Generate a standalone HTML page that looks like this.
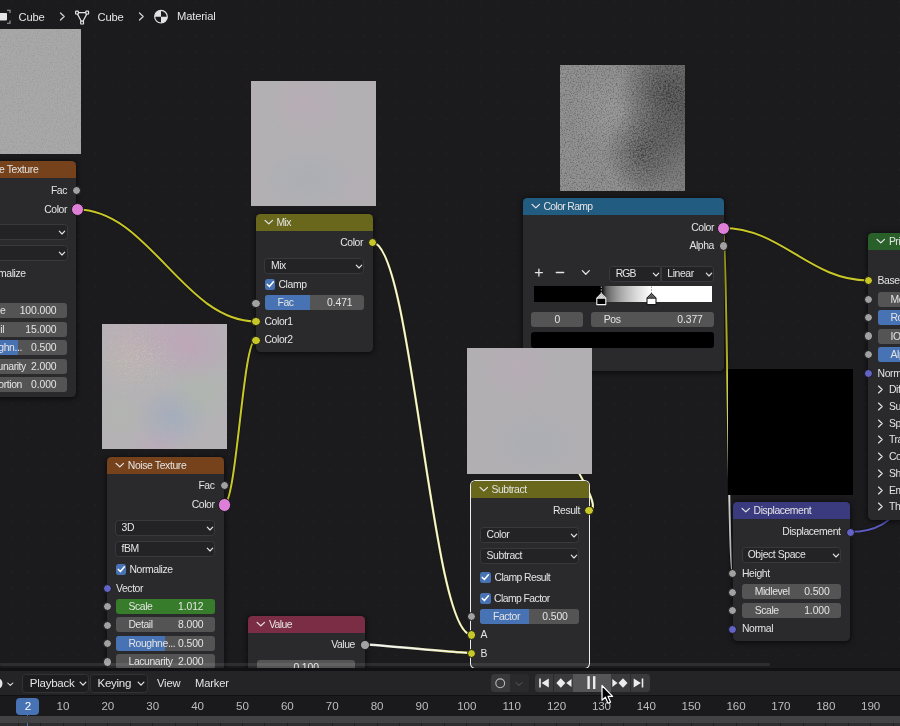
<!DOCTYPE html><html><head><meta charset="utf-8"><title>Shader Editor</title><style>
html,body{margin:0;padding:0}
body{width:900px;height:726px;overflow:hidden;background:#1b1a1d;position:relative;
font-family:"Liberation Sans",sans-serif;font-size:10.4px;letter-spacing:-0.4px;color:#e4e4e4;}
#grid{position:absolute;left:0;top:0;width:900px;height:668px;
background-image:radial-gradient(circle,#212024 0.7px,transparent 1.2px);background-size:16.75px 16.75px;background-position:3.28px 10.57px}
.a{position:absolute}
.node{position:absolute;background:#2a292c;border-radius:4.5px;box-shadow:0 1px 5px 1px rgba(0,0,0,.55)}
.hd{position:absolute;left:0;top:0;right:0;height:17px;border-radius:4.5px 4.5px 0 0;line-height:17px;white-space:nowrap;overflow:hidden}
.t{position:absolute;white-space:nowrap;line-height:15px;height:15px}
.r{text-align:right}
.fld{position:absolute;height:15px;line-height:15px;background:#545454;border-radius:3px;overflow:hidden;white-space:nowrap}
.fld i{position:absolute;left:0;top:0;bottom:0;background:#4772b3}
.fld b{position:absolute;font-weight:normal;top:0}
.dd{position:absolute;height:14px;line-height:14px;background:#232225;border:0.75px solid #39383c;border-radius:3.5px;white-space:nowrap;box-sizing:content-box}
.dd span{position:absolute;left:7px;top:0}
.dd svg{position:absolute;right:0.3px;top:5.2px}
.ck{position:absolute;width:10.5px;height:10.5px;background:#4772b3;border-radius:2.5px}
.ck svg{position:absolute;left:0;top:0}
.pv{position:absolute}
svg{display:block}
</style></head><body>
<div id="grid"></div><div id="all" style="position:absolute;left:0;top:0;width:900px;height:726px;will-change:transform">
<svg class="a" style="left:0;top:0" width="900" height="668" viewBox="0 0 900 668">
<defs><linearGradient id="gv" gradientUnits="userSpaceOnUse" x1="364" y1="0" x2="471" y2="0"><stop offset="0" stop-color="#dedede"/><stop offset="0.4" stop-color="#dedecb"/><stop offset="1" stop-color="#dcdc7c"/></linearGradient><linearGradient id="gh" gradientUnits="userSpaceOnUse" x1="0" y1="228" x2="0" y2="573"><stop offset="0" stop-color="#c7c729"/><stop offset="0.4" stop-color="#c7c729"/><stop offset="0.78" stop-color="#d6d6d6"/><stop offset="1" stop-color="#d6d6d6"/></linearGradient></defs>
<path d="M77,209.5 C148.4,209.5 184.1,321.3 255.5,321.3" fill="none" stroke="#121212" stroke-width="3.4" stroke-linecap="round"/><path d="M77,209.5 C148.4,209.5 184.1,321.3 255.5,321.3" fill="none" stroke="#c7c729" stroke-width="2.0" stroke-linecap="round"/>
<path d="M224,504.5 C236.6,504.5 242.9,339.8 255.5,339.8" fill="none" stroke="#121212" stroke-width="3.4" stroke-linecap="round"/><path d="M224,504.5 C236.6,504.5 242.9,339.8 255.5,339.8" fill="none" stroke="#c7c729" stroke-width="2.0" stroke-linecap="round"/>
<path d="M372.5,242.5 C411.9,242.5 431.6,634.5 471,634.5" fill="none" stroke="#121212" stroke-width="3.4" stroke-linecap="round"/><path d="M372.5,242.5 C411.9,242.5 431.6,634.5 471,634.5" fill="none" stroke="#dcdc84" stroke-width="2.3" stroke-linecap="round"/><path d="M372.5,242.5 C411.9,242.5 431.6,634.5 471,634.5" fill="none" stroke="#fbfbf2" stroke-width="1.1" stroke-linecap="round"/>
<path d="M364.5,644.5 C376.4,644.5 459.1,653 471,653" fill="none" stroke="#121212" stroke-width="3.4" stroke-linecap="round"/><path d="M364.5,644.5 C376.4,644.5 459.1,653 471,653" fill="none" stroke="url(#gv)" stroke-width="2.3" stroke-linecap="round"/><path d="M364.5,644.5 C376.4,644.5 459.1,653 471,653" fill="none" stroke="#fbfbf4" stroke-width="1.1" stroke-linecap="round"/>
<path d="M589,510 C615.6,510 495.9,358 522.5,358" fill="none" stroke="#121212" stroke-width="3.4" stroke-linecap="round"/><path d="M589,510 C615.6,510 495.9,358 522.5,358" fill="none" stroke="#dcdc84" stroke-width="2.3" stroke-linecap="round"/><path d="M589,510 C615.6,510 495.9,358 522.5,358" fill="none" stroke="#fbfbf2" stroke-width="1.1" stroke-linecap="round"/>
<path d="M723,228 C781.0,228 810.0,280.4 868,280.4" fill="none" stroke="#121212" stroke-width="3.4" stroke-linecap="round"/><path d="M723,228 C781.0,228 810.0,280.4 868,280.4" fill="none" stroke="#c7c729" stroke-width="2.0" stroke-linecap="round"/>
<path d="M723,228 C726.7,228 728.6,573.3 732.3,573.3" fill="none" stroke="#121212" stroke-width="3.4" stroke-linecap="round"/><path d="M723,228 C726.7,228 728.6,573.3 732.3,573.3" fill="none" stroke="url(#gh)" stroke-width="2.0" stroke-linecap="round"/>
<path d="M850,531.8 C880,531.8 890,520 910,500" fill="none" stroke="#121212" stroke-width="3.4" stroke-linecap="round"/><path d="M850,531.8 C880,531.8 890,520 910,500" fill="none" stroke="#5a5ac0" stroke-width="2.0" stroke-linecap="round"/>
</svg>
<svg class="a" width="0" height="0"><defs>
<filter id="nz" x="0" y="0" width="100%" height="100%"><feTurbulence type="fractalNoise" baseFrequency="0.75" numOctaves="2" seed="3" result="n"/><feColorMatrix type="matrix" values="0 0 0 0 0  0 0 0 0 0  0 0 0 0 0  1.8 0 0 0 -0.8"/></filter>
<filter id="nz3" x="0" y="0" width="100%" height="100%"><feTurbulence type="fractalNoise" baseFrequency="0.6" numOctaves="2" seed="11"/><feColorMatrix type="matrix" values="0 0 0 0 0  0 0 0 0 0  0 0 0 0 0  2.4 0 0 0 -1.0"/></filter>
<filter id="nzy" x="0" y="0" width="100%" height="100%"><feTurbulence type="fractalNoise" baseFrequency="0.85" numOctaves="1" seed="5"/><feColorMatrix type="matrix" values="0 0 0 0 0.86  0 0 0 0 0.8  0 0 0 0 0.6  3 0 0 0 -1.6"/></filter>
<filter id="nzb" x="0" y="0" width="100%" height="100%"><feTurbulence type="fractalNoise" baseFrequency="0.85" numOctaves="1" seed="9"/><feColorMatrix type="matrix" values="0 0 0 0 0.45  0 0 0 0 0.55  0 0 0 0 0.8  3 0 0 0 -1.65"/></filter>
<filter id="nz2" x="0" y="0" width="100%" height="100%"><feTurbulence type="fractalNoise" baseFrequency="0.8" numOctaves="1" seed="8"/><feColorMatrix type="matrix" values="0 0 0 0 1  0 0 0 0 1  0 0 0 0 1  0.5 0 0 0 -0.2"/></filter>
</defs></svg>
<div class="pv" style="left:0px;top:28.5px;width:80.5px;height:125.5px;background:#a9a9aa;overflow:hidden"><svg width="81" height="126"><rect width="81" height="126" filter="url(#nz)" opacity=".12"/></svg></div>
<div class="node" style="left:-40px;top:161.3px;width:116.3px;height:236px;"><div class="hd" style="background:#75421b"><svg class="a" style="left:8px;top:5.2px" width="9.6" height="6.6" viewBox="0 0 9 7" preserveAspectRatio="none"><polyline points="1,1.5 4.5,5.2 8,1.5" fill="none" stroke="#e4e4e4" stroke-width="1.15" stroke-linecap="round" stroke-linejoin="round"/></svg><span class="a" style="left:39px;top:0;letter-spacing:-0.36px">e Texture</span></div></div>
<span class="t" style="top:182.5px;right:833px;">Fac</span>
<span class="t" style="top:201.5px;right:833px;">Color</span>
<div class="dd" style="left:-40px;top:223.7px;width:105.5px;"><span style="left:5.6px"></span><svg width="8" height="6" viewBox="0 0 8 6"><polyline points="1.3,1.2 4,4 6.7,1.2" fill="none" stroke="#e4e4e4" stroke-width="1.15" stroke-linecap="round" stroke-linejoin="round"/></svg></div>
<div class="dd" style="left:-40px;top:244.6px;width:105.5px;"><span style="left:5.6px"></span><svg width="8" height="6" viewBox="0 0 8 6"><polyline points="1.3,1.2 4,4 6.7,1.2" fill="none" stroke="#e4e4e4" stroke-width="1.15" stroke-linecap="round" stroke-linejoin="round"/></svg></div>
<span class="t" style="top:266px;left:-2px;">malize</span>
<div class="fld" style="left:-30px;top:303.3px;width:97px;height:15px;line-height:15px;"><b style="left:30px">e</b><b style="right:10.5px;letter-spacing:-0.1px">100.000</b></div>
<div class="fld" style="left:-30px;top:321.75px;width:97px;height:15px;line-height:15px;"><b style="left:30.3px">il</b><b style="right:10.5px;letter-spacing:-0.1px">15.000</b></div>
<div class="fld" style="left:-30px;top:340.2px;width:97px;height:15px;line-height:15px;"><i style="width:48px"></i><b style="left:28.3px">ghn...</b><b style="right:10.5px;letter-spacing:-0.1px">0.500</b></div>
<div class="fld" style="left:-30px;top:358.65px;width:97px;height:15px;line-height:15px;"><b style="left:27.5px">unarity</b><b style="right:10.5px;letter-spacing:-0.1px">2.000</b></div>
<div class="fld" style="left:-30px;top:377.09999999999997px;width:97px;height:15px;line-height:15px;"><b style="left:28.3px">ortion</b><b style="right:10.5px;letter-spacing:-0.1px">0.000</b></div>
<div class="a" style="left:72.1px;top:185.8px;width:7.2px;height:7.2px;border-radius:50%;background:#a1a1a1;border:0.6px solid #151515"></div>
<div class="a" style="left:70.8px;top:203.3px;width:11.2px;height:11.2px;border-radius:50%;background:#dd7fd6;border:0.6px solid #151515"></div>
<div class="pv" style="left:101.6px;top:323.6px;width:125.8px;height:125.5px;background:radial-gradient(ellipse 36% 30% at 70% 18%,rgba(192,160,186,.6),rgba(192,160,186,0) 100%),radial-gradient(ellipse 60% 30% at 45% 8%,rgba(190,166,184,.5),rgba(190,166,184,0) 100%),radial-gradient(ellipse 32% 32% at 22% 24%,rgba(200,182,172,.4),rgba(200,182,172,0) 100%),radial-gradient(ellipse 28% 28% at 78% 55%,rgba(168,186,168,.45),rgba(168,186,168,0) 100%),radial-gradient(ellipse 30% 26% at 56% 74%,rgba(152,168,192,.55),rgba(152,168,192,0) 100%),radial-gradient(ellipse 26% 18% at 45% 97%,rgba(192,164,192,.45),rgba(192,164,192,0) 100%),radial-gradient(ellipse 22% 22% at 14% 72%,rgba(178,186,170,.4),rgba(178,186,170,0) 100%),#b4b2b5;overflow:hidden"><svg class="a" style="left:0;top:0;-webkit-mask-image:radial-gradient(ellipse 45% 40% at 30% 25%,#000,transparent);mask-image:radial-gradient(ellipse 45% 40% at 30% 25%,#000,transparent)" width="126" height="126"><rect width="126" height="126" filter="url(#nzy)" opacity=".55"/></svg><svg class="a" style="left:0;top:0;-webkit-mask-image:radial-gradient(ellipse 30% 30% at 62% 76%,#000,transparent);mask-image:radial-gradient(ellipse 30% 30% at 62% 76%,#000,transparent)" width="126" height="126"><rect width="126" height="126" filter="url(#nzb)" opacity=".5"/></svg></div>
<div class="node" style="left:106.8px;top:456.9px;width:117px;height:230px;"><div class="hd" style="background:#75421b"><svg class="a" style="left:8px;top:5.2px" width="9.6" height="6.6" viewBox="0 0 9 7" preserveAspectRatio="none"><polyline points="1,1.5 4.5,5.2 8,1.5" fill="none" stroke="#e4e4e4" stroke-width="1.15" stroke-linecap="round" stroke-linejoin="round"/></svg><span class="a" style="left:21px;top:0;letter-spacing:-0.37px">Noise Texture</span></div></div>
<span class="t" style="top:478px;right:685.5px;">Fac</span>
<span class="t" style="top:497px;right:685.5px;">Color</span>
<div class="dd" style="left:115px;top:519.6px;width:98.0px;"><span style="left:5.6px">3D</span><svg width="8" height="6" viewBox="0 0 8 6"><polyline points="1.3,1.2 4,4 6.7,1.2" fill="none" stroke="#e4e4e4" stroke-width="1.15" stroke-linecap="round" stroke-linejoin="round"/></svg></div>
<div class="dd" style="left:115px;top:540.6px;width:98.0px;"><span style="left:5.6px">fBM</span><svg width="8" height="6" viewBox="0 0 8 6"><polyline points="1.3,1.2 4,4 6.7,1.2" fill="none" stroke="#e4e4e4" stroke-width="1.15" stroke-linecap="round" stroke-linejoin="round"/></svg></div>
<div class="ck" style="left:115.5px;top:564px"><svg width="10.5" height="10.5" viewBox="0 0 10.5 10.5"><polyline points="2.3,5.4 4.4,7.6 8.4,2.8" fill="none" stroke="#fff" stroke-width="1.5" stroke-linecap="round" stroke-linejoin="round"/></svg></div>
<span class="t" style="top:561.8px;left:129.5px;">Normalize</span>
<span class="t" style="top:580.5px;left:116px;">Vector</span>
<div class="fld" style="left:115.5px;top:598.8px;width:99px;height:15px;line-height:15px;background:#377c2a;"><b style="left:13px">Scale</b><b style="right:11px;letter-spacing:-0.1px">1.012</b></div>
<div class="fld" style="left:115.5px;top:617.3px;width:99px;height:15px;line-height:15px;"><b style="left:13px">Detail</b><b style="right:11px;letter-spacing:-0.1px">8.000</b></div>
<div class="fld" style="left:115.5px;top:635.7px;width:99px;height:15px;line-height:15px;"><i style="width:49px"></i><b style="left:13px">Roughne...</b><b style="right:11px;letter-spacing:-0.1px">0.500</b></div>
<div class="fld" style="left:115.5px;top:654.2px;width:99px;height:15px;line-height:15px;"><b style="left:13px">Lacunarity</b><b style="right:11px;letter-spacing:-0.1px">2.000</b></div>
<div class="a" style="left:219.6px;top:481.3px;width:7.2px;height:7.2px;border-radius:50%;background:#a1a1a1;border:0.6px solid #151515"></div>
<div class="a" style="left:217.6px;top:498.1px;width:11.6px;height:11.6px;border-radius:50%;background:#dd7fd6;border:0.6px solid #151515"></div>
<div class="a" style="left:102.5px;top:583.7px;width:7.4px;height:7.4px;border-radius:50%;background:#6363c7;border:0.6px solid #151515"></div>
<div class="a" style="left:102.5px;top:602.0px;width:7.4px;height:7.4px;border-radius:50%;background:#a1a1a1;border:0.6px solid #151515"></div>
<div class="a" style="left:102.5px;top:620.5px;width:7.4px;height:7.4px;border-radius:50%;background:#a1a1a1;border:0.6px solid #151515"></div>
<div class="a" style="left:102.5px;top:638.9px;width:7.4px;height:7.4px;border-radius:50%;background:#a1a1a1;border:0.6px solid #151515"></div>
<div class="a" style="left:102.5px;top:657.4px;width:7.4px;height:7.4px;border-radius:50%;background:#a1a1a1;border:0.6px solid #151515"></div>
<div class="pv" style="left:250.8px;top:80.5px;width:125.5px;height:125.8px;background:radial-gradient(ellipse 34% 30% at 45% 18%,rgba(190,170,184,.5),rgba(190,170,184,0) 100%),radial-gradient(ellipse 40% 26% at 45% 78%,rgba(164,172,182,.5),rgba(164,172,182,0) 100%),radial-gradient(ellipse 22% 22% at 85% 85%,rgba(184,172,184,.4),rgba(184,172,184,0) 100%),#b2b0b3;overflow:hidden"></div>
<div class="node" style="left:255.5px;top:213.6px;width:117px;height:138.4px;"><div class="hd" style="background:#68671b"><svg class="a" style="left:8px;top:5.2px" width="9.6" height="6.6" viewBox="0 0 9 7" preserveAspectRatio="none"><polyline points="1,1.5 4.5,5.2 8,1.5" fill="none" stroke="#e4e4e4" stroke-width="1.15" stroke-linecap="round" stroke-linejoin="round"/></svg><span class="a" style="left:21px;top:0;letter-spacing:-0.55px">Mix</span></div></div>
<span class="t" style="top:235px;right:537px;">Color</span>
<div class="dd" style="left:264.3px;top:258px;width:97.5px;"><span style="left:5.6px">Mix</span><svg width="8" height="6" viewBox="0 0 8 6"><polyline points="1.3,1.2 4,4 6.7,1.2" fill="none" stroke="#e4e4e4" stroke-width="1.15" stroke-linecap="round" stroke-linejoin="round"/></svg></div>
<div class="ck" style="left:264.5px;top:279.3px"><svg width="10.5" height="10.5" viewBox="0 0 10.5 10.5"><polyline points="2.3,5.4 4.4,7.6 8.4,2.8" fill="none" stroke="#fff" stroke-width="1.5" stroke-linecap="round" stroke-linejoin="round"/></svg></div>
<span class="t" style="top:277.1px;left:278.5px;">Clamp</span>
<div class="fld" style="left:264.5px;top:295.2px;width:99px;height:15px;line-height:15px;"><i style="width:45.5px"></i><b style="left:13px">Fac</b><b style="right:11px;letter-spacing:-0.1px">0.471</b></div>
<span class="t" style="top:313.8px;left:264.5px;">Color1</span>
<span class="t" style="top:332.4px;left:264.5px;">Color2</span>
<div class="a" style="left:368.3px;top:238.3px;width:7.2px;height:7.2px;border-radius:50%;background:#c7c729;border:0.6px solid #151515"></div>
<div class="a" style="left:251.2px;top:298.5px;width:7.4px;height:7.4px;border-radius:50%;background:#a1a1a1;border:0.6px solid #151515"></div>
<div class="a" style="left:251.2px;top:317.0px;width:7.4px;height:7.4px;border-radius:50%;background:#c7c729;border:0.6px solid #151515"></div>
<div class="a" style="left:251.2px;top:335.5px;width:7.4px;height:7.4px;border-radius:50%;background:#c7c729;border:0.6px solid #151515"></div>
<div class="node" style="left:248px;top:615.5px;width:116.5px;height:60px;"><div class="hd" style="background:#7c2d46"><svg class="a" style="left:8px;top:5.2px" width="9.6" height="6.6" viewBox="0 0 9 7" preserveAspectRatio="none"><polyline points="1,1.5 4.5,5.2 8,1.5" fill="none" stroke="#e4e4e4" stroke-width="1.15" stroke-linecap="round" stroke-linejoin="round"/></svg><span class="a" style="left:21px;top:0;letter-spacing:-0.55px">Value</span></div></div>
<span class="t" style="top:637px;right:545px;">Value</span>
<div class="fld" style="left:256.8px;top:660px;width:98.7px;height:15px;line-height:15px;"><b style="left:0;right:0;text-align:center;letter-spacing:-0.1px">0.100</b></div>
<div class="a" style="left:360.2px;top:640.2px;width:7.4px;height:7.4px;border-radius:50%;background:#a1a1a1;border:0.6px solid #151515"></div>
<div class="pv" style="left:559.6px;top:65px;width:125.5px;height:126px;background:radial-gradient(ellipse 40% 48% at 88% 22%,rgba(0,0,0,.25),rgba(0,0,0,0) 100%),radial-gradient(ellipse 30% 34% at 66% 68%,rgba(0,0,0,.2),rgba(0,0,0,0) 100%),radial-gradient(ellipse 30% 40% at 100% 60%,rgba(0,0,0,.14),rgba(0,0,0,0) 100%),radial-gradient(ellipse 34% 34% at 42% 36%,rgba(255,255,255,.08),rgba(255,255,255,0) 100%),linear-gradient(90deg,#929292 0%,#929292 50%,#858585 75%,#828282 100%);overflow:hidden"><svg width="126" height="127"><rect width="126" height="127" filter="url(#nz)" opacity=".42"/></svg><svg class="a" style="left:0;top:0;-webkit-mask-image:radial-gradient(ellipse 42% 50% at 86% 24%,#000,transparent),radial-gradient(ellipse 30% 36% at 66% 70%,#000,transparent);mask-image:radial-gradient(ellipse 42% 50% at 86% 24%,#000,transparent),radial-gradient(ellipse 30% 36% at 66% 70%,#000,transparent)" width="126" height="127"><rect width="126" height="127" filter="url(#nz3)" opacity=".5"/></svg></div>
<div class="node" style="left:522.5px;top:198px;width:201.2px;height:173.3px;"><div class="hd" style="background:#225c80"><svg class="a" style="left:8px;top:5.2px" width="9.6" height="6.6" viewBox="0 0 9 7" preserveAspectRatio="none"><polyline points="1,1.5 4.5,5.2 8,1.5" fill="none" stroke="#e4e4e4" stroke-width="1.15" stroke-linecap="round" stroke-linejoin="round"/></svg><span class="a" style="left:21px;top:0;letter-spacing:-0.65px">Color Ramp</span></div></div>
<span class="t" style="top:219.5px;right:186px;">Color</span>
<span class="t" style="top:238px;right:186px;">Alpha</span>
<svg class="a" style="left:533px;top:266px" width="60" height="14" viewBox="0 0 60 14"><g stroke="#e4e4e4" stroke-width="1.3" fill="none" stroke-linecap="round" stroke-linejoin="round"><path d="M2.4,6.6 H9.4 M5.9,3.1 V10.1"/><path d="M23.3,6.5 H30.7"/><polyline points="49.3,4.6 52.8,8.2 56.3,4.6"/></g></svg>
<div class="dd" style="left:609.2px;top:265.8px;width:49.7px;border-radius:3.5px 0 0 3.5px;letter-spacing:-0.9px"><span style="left:5.5px">RGB</span><svg width="8" height="6" viewBox="0 0 8 6"><polyline points="1.3,1.2 4,4 6.7,1.2" fill="none" stroke="#e4e4e4" stroke-width="1.15" stroke-linecap="round" stroke-linejoin="round"/></svg></div>
<div class="dd" style="left:660.8px;top:265.8px;width:51.5px;border-radius:0 3.5px 3.5px 0"><span style="left:5.5px">Linear</span><svg width="8" height="6" viewBox="0 0 8 6"><polyline points="1.3,1.2 4,4 6.7,1.2" fill="none" stroke="#e4e4e4" stroke-width="1.15" stroke-linecap="round" stroke-linejoin="round"/></svg></div>
<div class="a" style="left:533.8px;top:286.4px;width:178px;height:15.3px;background:linear-gradient(90deg,#000 0,#000 67.3px,#595959 72.3px,#7c7c7c 77.3px,#959595 82.4px,#aaaaaa 87.4px,#bcbcbc 92.4px,#cbcbcb 97.4px,#dadada 102.4px,#e7e7e7 107.5px,#f3f3f3 112.5px,#fff 117.5px,#fff 100%)"></div>
<svg class="a" style="left:590px;top:284px" width="80" height="24" viewBox="0 0 80 24"><path d="M11.3,2.5 V9.5" stroke="#fff" stroke-width="0.8" stroke-dasharray="1.4,1.4"/><path d="M61.5,2.5 V9.5" stroke="#777" stroke-width="0.8" stroke-dasharray="1.4,1.4"/><path d="M6.800000000000001,14.2 L11.3,9.6 L15.8,14.2 V20.6 H6.800000000000001 Z" fill="#000" stroke="#f2f2f2" stroke-width="1.1" stroke-linejoin="round"/><path d="M7.4,14 L11.3,10.2 L15.200000000000001,14 Z" fill="#d0d0d0"/><path d="M6.800000000000001,14.3 H15.8" stroke="#f2f2f2" stroke-width="0.9"/><path d="M57.0,14.2 L61.5,9.6 L66.0,14.2 V20.6 H57.0 Z" fill="#fff" stroke="#1a1a1a" stroke-width="1.1" stroke-linejoin="round"/><path d="M57.6,14 L61.5,10.2 L65.4,14 Z" fill="#5a5a5a"/><path d="M57.0,14.3 H66.0" stroke="#1a1a1a" stroke-width="0.9"/></svg>
<div class="fld" style="left:531.3px;top:311.8px;width:52px;height:15px;line-height:15px;"><b style="left:0;right:0;text-align:center;letter-spacing:-0.1px">0</b></div>
<div class="fld" style="left:590.8px;top:311.8px;width:123px;height:15px;line-height:15px;"><b style="left:13px">Pos</b><b style="right:11px;letter-spacing:-0.1px">0.377</b></div>
<div class="a" style="left:531.3px;top:332.4px;width:182.5px;height:15.2px;background:#000;border-radius:3px"></div>
<div class="a" style="left:716.8px;top:221.8px;width:11.2px;height:11.2px;border-radius:50%;background:#dd7fd6;border:0.6px solid #151515"></div>
<div class="a" style="left:718.7px;top:241.2px;width:7.4px;height:7.4px;border-radius:50%;background:#a1a1a1;border:0.6px solid #151515"></div>
<div class="pv" style="left:727.9px;top:369px;width:125px;height:125.7px;background:#000;overflow:hidden"></div>
<div class="node" style="left:732.6px;top:502.3px;width:117.4px;height:139px;"><div class="hd" style="background:#3a3a7f"><svg class="a" style="left:8px;top:5.2px" width="9.6" height="6.6" viewBox="0 0 9 7" preserveAspectRatio="none"><polyline points="1,1.5 4.5,5.2 8,1.5" fill="none" stroke="#e4e4e4" stroke-width="1.15" stroke-linecap="round" stroke-linejoin="round"/></svg><span class="a" style="left:21px;top:0;letter-spacing:-0.45px">Displacement</span></div></div>
<span class="t" style="top:524px;right:59.5px;">Displacement</span>
<div class="dd" style="left:741.7px;top:546.5px;width:97.5px;"><span style="left:5px">Object Space</span><svg width="8" height="6" viewBox="0 0 8 6"><polyline points="1.3,1.2 4,4 6.7,1.2" fill="none" stroke="#e4e4e4" stroke-width="1.15" stroke-linecap="round" stroke-linejoin="round"/></svg></div>
<span class="t" style="top:565.8px;left:742px;">Height</span>
<div class="fld" style="left:741.7px;top:584.2px;width:99px;height:15px;line-height:15px;"><b style="left:13px">Midlevel</b><b style="right:11px;letter-spacing:-0.1px">0.500</b></div>
<div class="fld" style="left:741.7px;top:603px;width:99px;height:15px;line-height:15px;"><b style="left:13px">Scale</b><b style="right:11px;letter-spacing:-0.1px">1.000</b></div>
<span class="t" style="top:621.3px;left:742px;">Normal</span>
<div class="a" style="left:845.7px;top:527.5px;width:7.4px;height:7.4px;border-radius:50%;background:#6363c7;border:0.6px solid #151515"></div>
<div class="a" style="left:728.0px;top:569.0px;width:7.4px;height:7.4px;border-radius:50%;background:#a1a1a1;border:0.6px solid #151515"></div>
<div class="a" style="left:728.0px;top:587.5px;width:7.4px;height:7.4px;border-radius:50%;background:#a1a1a1;border:0.6px solid #151515"></div>
<div class="a" style="left:728.0px;top:606.1px;width:7.4px;height:7.4px;border-radius:50%;background:#a1a1a1;border:0.6px solid #151515"></div>
<div class="a" style="left:728.0px;top:624.6px;width:7.4px;height:7.4px;border-radius:50%;background:#6363c7;border:0.6px solid #151515"></div>
<div class="node" style="left:867.9px;top:233px;width:60px;height:286.5px;"><div class="hd" style="background:#296029"><svg class="a" style="left:8px;top:5.2px" width="9.6" height="6.6" viewBox="0 0 9 7" preserveAspectRatio="none"><polyline points="1,1.5 4.5,5.2 8,1.5" fill="none" stroke="#e4e4e4" stroke-width="1.15" stroke-linecap="round" stroke-linejoin="round"/></svg><span class="a" style="left:21px;top:0;letter-spacing:-0.45px">Principled BSDF</span></div></div>
<span class="t" style="top:272.8px;left:877.6px;">Base Color</span>
<div class="fld" style="left:877.5px;top:291.8px;width:99px;height:15px;line-height:15px;"><b style="left:13px">Metallic</b><b style="right:11px;letter-spacing:-0.1px">0.000</b></div>
<div class="fld" style="left:877.5px;top:310.2px;width:99px;height:15px;line-height:15px;"><i style="width:49px"></i><b style="left:13px">Roughness</b><b style="right:11px;letter-spacing:-0.1px">0.500</b></div>
<div class="fld" style="left:877.5px;top:328.5px;width:99px;height:15px;line-height:15px;"><b style="left:13px">IOR</b><b style="right:11px;letter-spacing:-0.1px">1.500</b></div>
<div class="fld" style="left:877.5px;top:347px;width:99px;height:15px;line-height:15px;"><i style="width:99px"></i><b style="left:13px">Alpha</b><b style="right:11px;letter-spacing:-0.1px">1.000</b></div>
<span class="t" style="top:365.5px;left:877.6px;">Normal</span>
<svg class="a" style="left:877.2px;top:385.0px" width="7" height="9" viewBox="0 0 7 9"><polyline points="1.5,1 5.2,4.5 1.5,8" fill="none" stroke="#e4e4e4" stroke-width="1.15" stroke-linecap="round" stroke-linejoin="round"/></svg>
<span class="t" style="top:382.0px;left:889px;">Diffuse</span>
<svg class="a" style="left:877.2px;top:401.75px" width="7" height="9" viewBox="0 0 7 9"><polyline points="1.5,1 5.2,4.5 1.5,8" fill="none" stroke="#e4e4e4" stroke-width="1.15" stroke-linecap="round" stroke-linejoin="round"/></svg>
<span class="t" style="top:398.75px;left:889px;">Subsurface</span>
<svg class="a" style="left:877.2px;top:418.5px" width="7" height="9" viewBox="0 0 7 9"><polyline points="1.5,1 5.2,4.5 1.5,8" fill="none" stroke="#e4e4e4" stroke-width="1.15" stroke-linecap="round" stroke-linejoin="round"/></svg>
<span class="t" style="top:415.5px;left:889px;">Specular</span>
<svg class="a" style="left:877.2px;top:435.25px" width="7" height="9" viewBox="0 0 7 9"><polyline points="1.5,1 5.2,4.5 1.5,8" fill="none" stroke="#e4e4e4" stroke-width="1.15" stroke-linecap="round" stroke-linejoin="round"/></svg>
<span class="t" style="top:432.25px;left:889px;">Transmission</span>
<svg class="a" style="left:877.2px;top:452.0px" width="7" height="9" viewBox="0 0 7 9"><polyline points="1.5,1 5.2,4.5 1.5,8" fill="none" stroke="#e4e4e4" stroke-width="1.15" stroke-linecap="round" stroke-linejoin="round"/></svg>
<span class="t" style="top:449.0px;left:889px;">Coat</span>
<svg class="a" style="left:877.2px;top:468.75px" width="7" height="9" viewBox="0 0 7 9"><polyline points="1.5,1 5.2,4.5 1.5,8" fill="none" stroke="#e4e4e4" stroke-width="1.15" stroke-linecap="round" stroke-linejoin="round"/></svg>
<span class="t" style="top:465.75px;left:889px;">Sheen</span>
<svg class="a" style="left:877.2px;top:485.5px" width="7" height="9" viewBox="0 0 7 9"><polyline points="1.5,1 5.2,4.5 1.5,8" fill="none" stroke="#e4e4e4" stroke-width="1.15" stroke-linecap="round" stroke-linejoin="round"/></svg>
<span class="t" style="top:482.5px;left:889px;">Emission</span>
<svg class="a" style="left:877.2px;top:502.25px" width="7" height="9" viewBox="0 0 7 9"><polyline points="1.5,1 5.2,4.5 1.5,8" fill="none" stroke="#e4e4e4" stroke-width="1.15" stroke-linecap="round" stroke-linejoin="round"/></svg>
<span class="t" style="top:499.25px;left:889px;">Thin Film</span>
<div class="a" style="left:863.5px;top:276.0px;width:7.4px;height:7.4px;border-radius:50%;background:#c7c729;border:0.6px solid #151515"></div>
<div class="a" style="left:863.5px;top:294.6px;width:7.4px;height:7.4px;border-radius:50%;background:#a1a1a1;border:0.6px solid #151515"></div>
<div class="a" style="left:863.5px;top:312.9px;width:7.4px;height:7.4px;border-radius:50%;background:#a1a1a1;border:0.6px solid #151515"></div>
<div class="a" style="left:863.5px;top:331.2px;width:7.4px;height:7.4px;border-radius:50%;background:#a1a1a1;border:0.6px solid #151515"></div>
<div class="a" style="left:863.5px;top:350.0px;width:7.4px;height:7.4px;border-radius:50%;background:#a1a1a1;border:0.6px solid #151515"></div>
<div class="a" style="left:863.5px;top:368.7px;width:7.4px;height:7.4px;border-radius:50%;background:#6363c7;border:0.6px solid #151515"></div>
<div class="pv" style="left:466.6px;top:348px;width:125.2px;height:125.8px;background:radial-gradient(ellipse 34% 30% at 40% 15%,rgba(188,170,184,.5),rgba(188,170,184,0) 100%),radial-gradient(ellipse 40% 28% at 55% 75%,rgba(166,172,182,.5),rgba(166,172,182,0) 100%),#b1afb2;overflow:hidden"></div>
<div class="node" style="left:470.5px;top:480.5px;width:118.8px;height:187px;box-shadow:0 0 0 1px #ededed"><div class="hd" style="background:#68671b"><svg class="a" style="left:8px;top:5.2px" width="9.6" height="6.6" viewBox="0 0 9 7" preserveAspectRatio="none"><polyline points="1,1.5 4.5,5.2 8,1.5" fill="none" stroke="#e4e4e4" stroke-width="1.15" stroke-linecap="round" stroke-linejoin="round"/></svg><span class="a" style="left:21px;top:0;letter-spacing:-0.45px">Subtract</span></div></div>
<span class="t" style="top:502.5px;right:320px;">Result</span>
<div class="dd" style="left:480px;top:527px;width:97.3px;"><span style="left:5.6px">Color</span><svg width="8" height="6" viewBox="0 0 8 6"><polyline points="1.3,1.2 4,4 6.7,1.2" fill="none" stroke="#e4e4e4" stroke-width="1.15" stroke-linecap="round" stroke-linejoin="round"/></svg></div>
<div class="dd" style="left:480px;top:548px;width:97.3px;"><span style="left:5.6px">Subtract</span><svg width="8" height="6" viewBox="0 0 8 6"><polyline points="1.3,1.2 4,4 6.7,1.2" fill="none" stroke="#e4e4e4" stroke-width="1.15" stroke-linecap="round" stroke-linejoin="round"/></svg></div>
<div class="ck" style="left:480px;top:572px"><svg width="10.5" height="10.5" viewBox="0 0 10.5 10.5"><polyline points="2.3,5.4 4.4,7.6 8.4,2.8" fill="none" stroke="#fff" stroke-width="1.5" stroke-linecap="round" stroke-linejoin="round"/></svg></div>
<span class="t" style="top:569.8px;left:494.5px;letter-spacing:-0.56px;">Clamp Result</span>
<div class="ck" style="left:480px;top:593px"><svg width="10.5" height="10.5" viewBox="0 0 10.5 10.5"><polyline points="2.3,5.4 4.4,7.6 8.4,2.8" fill="none" stroke="#fff" stroke-width="1.5" stroke-linecap="round" stroke-linejoin="round"/></svg></div>
<span class="t" style="top:590.8px;left:494px;letter-spacing:-0.56px;">Clamp Factor</span>
<div class="fld" style="left:480px;top:609.3px;width:98.8px;height:15px;line-height:15px;"><i style="width:48.8px"></i><b style="left:13px">Factor</b><b style="right:11px;letter-spacing:-0.1px">0.500</b></div>
<span class="t" style="top:627px;left:480.5px;">A</span>
<span class="t" style="top:645.5px;left:480.5px;">B</span>
<div class="a" style="left:584.2px;top:505.7px;width:7.4px;height:7.4px;border-radius:50%;background:#c7c729;border:0.6px solid #151515"></div>
<div class="a" style="left:466.7px;top:612.0px;width:7.4px;height:7.4px;border-radius:50%;background:#a1a1a1;border:0.6px solid #151515"></div>
<div class="a" style="left:466.7px;top:630.2px;width:7.4px;height:7.4px;border-radius:50%;background:#c7c729;border:0.6px solid #151515"></div>
<div class="a" style="left:466.7px;top:648.7px;width:7.4px;height:7.4px;border-radius:50%;background:#c7c729;border:0.6px solid #151515"></div>
<div class="a" style="left:0;top:0;width:900px;height:28px"></div>
<svg class="a" style="left:0;top:8px" width="12" height="18" viewBox="0 0 12 18"><rect x="-2" y="5" width="9" height="7.4" rx="0.8" fill="#e4e4e4"/><path d="M7,2.3 H10 V5 M10,12.5 V15.2 H7" fill="none" stroke="#a5a5a5" stroke-width="1.1"/></svg>
<span class="t" style="top:9.5px;left:18.5px;font-size:11.2px;letter-spacing:-0.15px;">Cube</span>
<svg class="a" style="left:58.7px;top:12.1px" width="7" height="9" viewBox="0 0 7 9"><polyline points="1.5,1 5.2,4.5 1.5,8" fill="none" stroke="#d0d0d0" stroke-width="1.3" stroke-linecap="round" stroke-linejoin="round"/></svg>
<svg class="a" style="left:74px;top:8.5px" width="17" height="17" viewBox="0 0 17 17"><g fill="none" stroke="#e4e4e4" stroke-width="1.2"><path d="M3.2,3.6 H13 M3.2,4.6 L7.7,13 M13,4.6 L8.6,13"/><rect x="1.6" y="2.2" width="2.8" height="2.8" rx="0.6" fill="#1b1a1d"/><rect x="11.8" y="2.2" width="2.8" height="2.8" rx="0.6" fill="#1b1a1d"/><rect x="6.7" y="12.2" width="2.8" height="2.8" rx="0.6" fill="#1b1a1d"/></g></svg>
<span class="t" style="top:9.5px;left:97.5px;font-size:11.2px;letter-spacing:-0.15px;">Cube</span>
<svg class="a" style="left:138.3px;top:12.1px" width="7" height="9" viewBox="0 0 7 9"><polyline points="1.5,1 5.2,4.5 1.5,8" fill="none" stroke="#d0d0d0" stroke-width="1.3" stroke-linecap="round" stroke-linejoin="round"/></svg>
<svg class="a" style="left:153.2px;top:8.6px" width="16" height="16" viewBox="0 0 16 16"><circle cx="8" cy="7.7" r="6.3" fill="none" stroke="#e4e4e4" stroke-width="1.2"/><path d="M8,1.4 A6.3,6.3 0 0 0 1.7,7.7 H8 Z" fill="#e4e4e4"/><path d="M8,14 A6.3,6.3 0 0 0 14.3,7.7 H8 Z" fill="#e4e4e4"/></svg>
<span class="t" style="top:9.3px;left:177px;font-size:11.2px;letter-spacing:-0.15px;">Material</span>
<div class="a" style="left:0;top:663.1px;width:770px;height:3px;background:rgba(255,255,255,.085);border-radius:1.4px"></div>
<div class="a" style="left:0;top:668.2px;width:900px;height:57.8px;background:#111113"></div>
<div class="a" style="left:0;top:670.9px;width:900px;height:24.6px;background:#242326"></div>
<svg class="a" style="left:-6px;top:677px" width="12" height="13" viewBox="0 0 12 13"><circle cx="3" cy="6.5" r="5.5" fill="#e4e4e4"/></svg>
<svg class="a" style="left:7.2px;top:681.8px" width="6.6" height="4.6" viewBox="0 0 9 7" preserveAspectRatio="none"><polyline points="1,1.5 4.5,5.2 8,1.5" fill="none" stroke="#e4e4e4" stroke-width="1.5" stroke-linecap="round" stroke-linejoin="round"/></svg>
<div class="dd" style="left:21.8px;top:674px;width:65.5px;height:16.5px;line-height:16.5px;background:#1d1c1f;border-color:#333235;font-size:11.5px;letter-spacing:-0.25px"><span style="left:7px">Playback</span><svg style="top:6.3px;right:1.8px" width="8" height="6" viewBox="0 0 8 6"><polyline points="1.1,1.1 4,4.2 6.9,1.1" fill="none" stroke="#e4e4e4" stroke-width="1.2" stroke-linecap="round" stroke-linejoin="round"/></svg></div>
<div class="dd" style="left:89.5px;top:674px;width:56.5px;height:16.5px;line-height:16.5px;background:#1d1c1f;border-color:#333235;font-size:11.5px;letter-spacing:-0.25px"><span style="left:7px">Keying</span><svg style="top:6.3px;right:1.8px" width="8" height="6" viewBox="0 0 8 6"><polyline points="1.1,1.1 4,4.2 6.9,1.1" fill="none" stroke="#e4e4e4" stroke-width="1.2" stroke-linecap="round" stroke-linejoin="round"/></svg></div>
<span class="t" style="top:676px;left:157px;font-size:11.2px;letter-spacing:-0.15px;">View</span>
<span class="t" style="top:676px;left:195px;font-size:11.2px;letter-spacing:-0.15px;">Marker</span>
<div class="a" style="left:491.3px;top:674.3px;width:18.3px;height:17.7px;background:#38373a;border-radius:3.5px 0 0 3.5px"></div>
<div class="a" style="left:510.2px;top:674.3px;width:18.5px;height:17.7px;background:#2a292c;border-radius:0 3.5px 3.5px 0"></div>
<svg class="a" style="left:494px;top:677px" width="13" height="13" viewBox="0 0 13 13"><circle cx="6.2" cy="6.3" r="4.4" fill="none" stroke="#b8b8b8" stroke-width="1.1"/></svg>
<svg class="a" style="left:515px;top:680.5px" width="8" height="6" viewBox="0 0 9 7" preserveAspectRatio="none"><polyline points="1,1.5 4.5,5.2 8,1.5" fill="none" stroke="#4a494c" stroke-width="1.3" stroke-linecap="round" stroke-linejoin="round"/></svg>
<div class="a" style="left:535px;top:674.3px;width:114.5px;height:17.7px;background:#3a393c;border-radius:3.5px;overflow:hidden"><div class="a" style="left:18px;top:0;width:0.8px;height:18px;background:#2a292c"></div><div class="a" style="left:37.5px;top:0;width:38px;height:18px;background:#555457"></div><div class="a" style="left:94.5px;top:0;width:0.8px;height:18px;background:#2a292c"></div></div>
<svg class="a" style="left:535px;top:674.3px" width="115" height="18" viewBox="0 0 115 18"><g fill="#ececec"><rect x="4.2" y="4.5" width="1.6" height="9"/><path d="M13.8,4.6 L6.6,9 L13.8,13.4 Z"/><path d="M25.8,4.3 L30.3,9 L25.8,13.7 L21.3,9 Z"/><path d="M36.5,5 L31.3,9 L36.5,13 Z"/><rect x="52.4" y="2.2" width="2.4" height="12.8"/><rect x="58" y="2.2" width="2.4" height="12.8"/><path d="M77.3,5 L82.5,9 L77.3,13 Z"/><path d="M88,4.3 L92.5,9 L88,13.7 L83.5,9 Z"/><path d="M98.7,4.6 L105.9,9 L98.7,13.4 Z"/><rect x="106.7" y="4.5" width="1.6" height="9"/></g></svg>
<div class="a" style="left:0;top:695.5px;width:900px;height:21px;background:#1a191c"></div>
<div class="a" style="left:0;top:716.4px;width:900px;height:9.6px;background:#2e2d30"></div>
<div class="a" style="left:26.5px;top:712px;width:1.6px;height:14px;background:#4772b3"></div>
<div class="a" style="left:0;top:716.4px;width:900px;height:6.8px;background:#424144"></div>
<div class="a" style="left:17.6px;top:723.2px;width:1px;height:3px;background:#1f1e21"></div>
<div class="a" style="left:40.0px;top:723.2px;width:1px;height:3px;background:#1f1e21"></div>
<div class="a" style="left:62.5px;top:723.2px;width:1px;height:3px;background:#1f1e21"></div>
<div class="a" style="left:84.9px;top:723.2px;width:1px;height:3px;background:#1f1e21"></div>
<div class="a" style="left:107.3px;top:723.2px;width:1px;height:3px;background:#1f1e21"></div>
<div class="a" style="left:129.8px;top:723.2px;width:1px;height:3px;background:#1f1e21"></div>
<div class="a" style="left:152.2px;top:723.2px;width:1px;height:3px;background:#1f1e21"></div>
<div class="a" style="left:174.6px;top:723.2px;width:1px;height:3px;background:#1f1e21"></div>
<div class="a" style="left:197.1px;top:723.2px;width:1px;height:3px;background:#1f1e21"></div>
<div class="a" style="left:219.5px;top:723.2px;width:1px;height:3px;background:#1f1e21"></div>
<div class="a" style="left:241.9px;top:723.2px;width:1px;height:3px;background:#1f1e21"></div>
<div class="a" style="left:264.4px;top:723.2px;width:1px;height:3px;background:#1f1e21"></div>
<div class="a" style="left:286.8px;top:723.2px;width:1px;height:3px;background:#1f1e21"></div>
<div class="a" style="left:309.3px;top:723.2px;width:1px;height:3px;background:#1f1e21"></div>
<div class="a" style="left:331.7px;top:723.2px;width:1px;height:3px;background:#1f1e21"></div>
<div class="a" style="left:354.1px;top:723.2px;width:1px;height:3px;background:#1f1e21"></div>
<div class="a" style="left:376.6px;top:723.2px;width:1px;height:3px;background:#1f1e21"></div>
<div class="a" style="left:399.0px;top:723.2px;width:1px;height:3px;background:#1f1e21"></div>
<div class="a" style="left:421.4px;top:723.2px;width:1px;height:3px;background:#1f1e21"></div>
<div class="a" style="left:443.9px;top:723.2px;width:1px;height:3px;background:#1f1e21"></div>
<div class="a" style="left:466.3px;top:723.2px;width:1px;height:3px;background:#1f1e21"></div>
<div class="a" style="left:488.7px;top:723.2px;width:1px;height:3px;background:#1f1e21"></div>
<div class="a" style="left:511.2px;top:723.2px;width:1px;height:3px;background:#1f1e21"></div>
<div class="a" style="left:533.6px;top:723.2px;width:1px;height:3px;background:#1f1e21"></div>
<div class="a" style="left:556.0px;top:723.2px;width:1px;height:3px;background:#1f1e21"></div>
<div class="a" style="left:578.5px;top:723.2px;width:1px;height:3px;background:#1f1e21"></div>
<div class="a" style="left:600.9px;top:723.2px;width:1px;height:3px;background:#1f1e21"></div>
<div class="a" style="left:623.3px;top:723.2px;width:1px;height:3px;background:#1f1e21"></div>
<div class="a" style="left:645.8px;top:723.2px;width:1px;height:3px;background:#1f1e21"></div>
<div class="a" style="left:668.2px;top:723.2px;width:1px;height:3px;background:#1f1e21"></div>
<div class="a" style="left:690.6px;top:723.2px;width:1px;height:3px;background:#1f1e21"></div>
<div class="a" style="left:713.1px;top:723.2px;width:1px;height:3px;background:#1f1e21"></div>
<div class="a" style="left:735.5px;top:723.2px;width:1px;height:3px;background:#1f1e21"></div>
<div class="a" style="left:758.0px;top:723.2px;width:1px;height:3px;background:#1f1e21"></div>
<div class="a" style="left:780.4px;top:723.2px;width:1px;height:3px;background:#1f1e21"></div>
<div class="a" style="left:802.8px;top:723.2px;width:1px;height:3px;background:#1f1e21"></div>
<div class="a" style="left:825.3px;top:723.2px;width:1px;height:3px;background:#1f1e21"></div>
<div class="a" style="left:847.7px;top:723.2px;width:1px;height:3px;background:#1f1e21"></div>
<div class="a" style="left:870.1px;top:723.2px;width:1px;height:3px;background:#1f1e21"></div>
<div class="a" style="left:892.6px;top:723.2px;width:1px;height:3px;background:#1f1e21"></div>
<span class="t" style="left:42.97px;width:40px;text-align:center;top:698px;font-size:11.6px;letter-spacing:-0.1px;color:#bdbdbd">10</span>
<span class="t" style="left:87.84px;width:40px;text-align:center;top:698px;font-size:11.6px;letter-spacing:-0.1px;color:#bdbdbd">20</span>
<span class="t" style="left:132.70999999999998px;width:40px;text-align:center;top:698px;font-size:11.6px;letter-spacing:-0.1px;color:#bdbdbd">30</span>
<span class="t" style="left:177.57999999999998px;width:40px;text-align:center;top:698px;font-size:11.6px;letter-spacing:-0.1px;color:#bdbdbd">40</span>
<span class="t" style="left:222.45px;width:40px;text-align:center;top:698px;font-size:11.6px;letter-spacing:-0.1px;color:#bdbdbd">50</span>
<span class="t" style="left:267.32px;width:40px;text-align:center;top:698px;font-size:11.6px;letter-spacing:-0.1px;color:#bdbdbd">60</span>
<span class="t" style="left:312.19px;width:40px;text-align:center;top:698px;font-size:11.6px;letter-spacing:-0.1px;color:#bdbdbd">70</span>
<span class="t" style="left:357.06px;width:40px;text-align:center;top:698px;font-size:11.6px;letter-spacing:-0.1px;color:#bdbdbd">80</span>
<span class="t" style="left:401.93px;width:40px;text-align:center;top:698px;font-size:11.6px;letter-spacing:-0.1px;color:#bdbdbd">90</span>
<span class="t" style="left:446.8px;width:40px;text-align:center;top:698px;font-size:11.6px;letter-spacing:-0.1px;color:#bdbdbd">100</span>
<span class="t" style="left:491.67px;width:40px;text-align:center;top:698px;font-size:11.6px;letter-spacing:-0.1px;color:#bdbdbd">110</span>
<span class="t" style="left:536.54px;width:40px;text-align:center;top:698px;font-size:11.6px;letter-spacing:-0.1px;color:#bdbdbd">120</span>
<span class="t" style="left:581.41px;width:40px;text-align:center;top:698px;font-size:11.6px;letter-spacing:-0.1px;color:#bdbdbd">130</span>
<span class="t" style="left:626.28px;width:40px;text-align:center;top:698px;font-size:11.6px;letter-spacing:-0.1px;color:#bdbdbd">140</span>
<span class="t" style="left:671.15px;width:40px;text-align:center;top:698px;font-size:11.6px;letter-spacing:-0.1px;color:#bdbdbd">150</span>
<span class="t" style="left:716.02px;width:40px;text-align:center;top:698px;font-size:11.6px;letter-spacing:-0.1px;color:#bdbdbd">160</span>
<span class="t" style="left:760.89px;width:40px;text-align:center;top:698px;font-size:11.6px;letter-spacing:-0.1px;color:#bdbdbd">170</span>
<span class="t" style="left:805.76px;width:40px;text-align:center;top:698px;font-size:11.6px;letter-spacing:-0.1px;color:#bdbdbd">180</span>
<span class="t" style="left:850.63px;width:40px;text-align:center;top:698px;font-size:11.6px;letter-spacing:-0.1px;color:#bdbdbd">190</span>
<div class="a" style="left:16px;top:698.1px;width:23.4px;height:16.6px;background:#4772b3;border-radius:4px;text-align:center;line-height:16.6px;font-size:11.6px;color:#fff">2</div>
<svg class="a" style="left:600px;top:684px" width="16" height="22" viewBox="0 0 16 22"><path d="M2,1.5 V16.2 L5.4,13.2 L8,19.3 L10.6,18.2 L8,12.3 H12.6 Z" fill="#000" stroke="#fff" stroke-width="1.2" stroke-linejoin="round"/></svg>
</div></body></html>
